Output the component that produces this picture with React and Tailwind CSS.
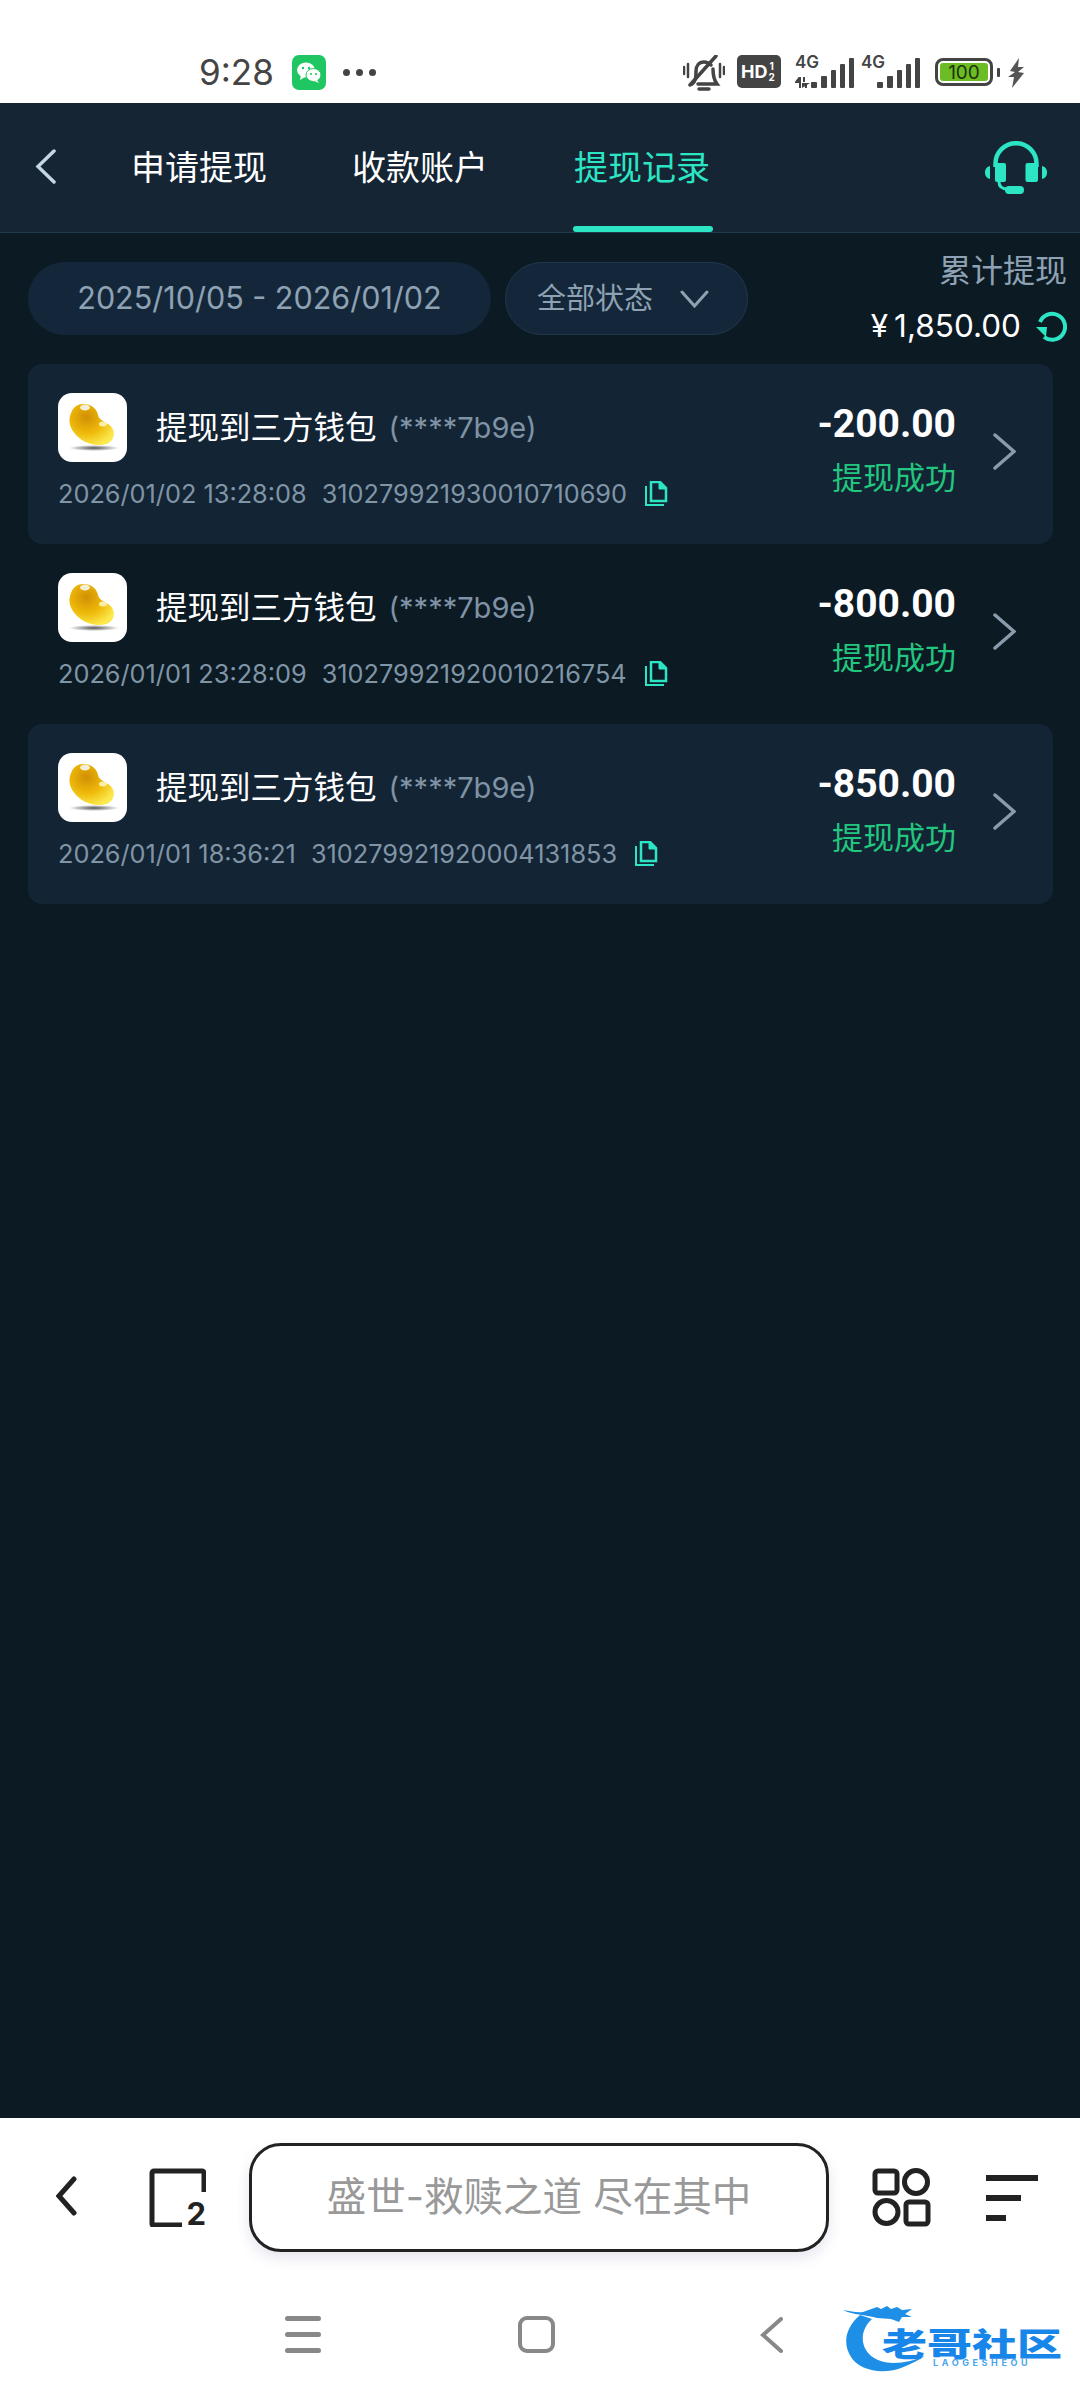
const font = { fontFamily: 'Inter, "Noto Sans CJK SC", sans-serif' }

const records = [
  { id: 1, time: '2026/01/02 13:28:08', no: '310279921930010710690', amount: '-200.00', filled: true },
  { id: 2, time: '2026/01/01 23:28:09', no: '310279921920010216754', amount: '-800.00', filled: false },
  { id: 3, time: '2026/01/01 18:36:21', no: '310279921920004131853', amount: '-850.00', filled: true },
]

function WeChat() {
  return (
    <div className="w-[34px] h-[35px] rounded-[7px] bg-[#1fc662] flex items-center justify-center">
      <svg width="26" height="24" viewBox="0 0 26 24">
        <ellipse cx="10" cy="9" rx="9" ry="7.5" fill="#fff" />
        <path d="M5 14l-1 5 5-3z" fill="#fff" />
        <ellipse cx="17.5" cy="14" rx="7.5" ry="6.5" fill="#fff" stroke="#1fc662" strokeWidth="1" />
        <path d="M21 19l2 3-5-2z" fill="#fff" />
        <circle cx="7" cy="7" r="1.2" fill="#1fc662" />
        <circle cx="13" cy="7" r="1.2" fill="#1fc662" />
        <circle cx="15" cy="13" r="1.1" fill="#1fc662" />
        <circle cx="20" cy="13" r="1.1" fill="#1fc662" />
      </svg>
    </div>
  )
}

function MuteBell() {
  return (
    <svg width="42" height="36" viewBox="0 0 42 36" fill="none" stroke="#444" strokeLinecap="round">
      <path d="M1 12v7M5 9v13M37 9v13M41 12v7" strokeWidth="2.500" />
      <path d="M9 29c4-3 4-7 4-13 0-5 3-9 8-9 3 0 5 1 7 3M30 14c0 6 1 11 4 15H15" strokeWidth="3.500" />
      <path d="M33 1L7 30" strokeWidth="3.500" />
      <path d="M16 34h10" strokeWidth="3.500" />
    </svg>
  )
}

function Signal({ arrows }) {
  return (
    <div className="relative h-[33px] w-[60px]">
      <span className="absolute left-0 top-[-3px] text-[17px] leading-[20px] font-semibold text-[#444]">4G</span>
      <svg className="absolute right-0 bottom-0" width="44" height="30" viewBox="0 0 44 30" fill="#444">
        <rect x="0" y="24" width="6" height="6" rx="1" />
        <rect x="10" y="18" width="6" height="12" rx="1" />
        <rect x="20" y="12" width="5" height="18" rx="1" />
        <rect x="29" y="6" width="5" height="24" rx="1" />
        <rect x="38" y="0" width="5" height="30" rx="1" />
      </svg>
      {arrows && (
        <svg className="absolute left-0 bottom-0" width="16" height="11" viewBox="0 0 16 11" fill="#444">
          <path d="M5 0v5H1zM5 6v5M9 0v5M11 6v5" stroke="#444" strokeWidth="2" />
          <path d="M7 11V6h8z" />
        </svg>
      )}
    </div>
  )
}

function StatusBar() {
  return (
    <div className="h-[103px] bg-white flex items-start pt-[55px] pl-[199px]">
      <span className="text-[35px] leading-[34px] text-[#444] w-[93px]">9:28</span>
      <WeChat />
      <div className="flex gap-[6px] ml-[17px] mt-[14px]">
        <span className="w-[7px] h-[7px] rounded-full bg-[#444]" />
        <span className="w-[7px] h-[7px] rounded-full bg-[#444]" />
        <span className="w-[7px] h-[7px] rounded-full bg-[#444]" />
      </div>
      <div className="ml-[307px]"><MuteBell /></div>
      <div className="ml-[12px] w-[44px] h-[33px] rounded-[5px] bg-[#444] flex items-center pl-[4px] gap-[1px] text-white font-bold">
        <span className="text-[18px] leading-none">HD</span>
        <span className="text-[10px] leading-[11px] flex flex-col items-center"><span>1</span><span>2</span></span>
      </div>
      <div className="ml-[14px]"><Signal arrows /></div>
      <div className="ml-[6px]"><Signal /></div>
      <div className="ml-[14px] mt-[3px] flex items-center">
        <div className="w-[58px] h-[28px] rounded-[8px] border-[3px] border-[#444] p-[2px]">
          <div className="h-full rounded-[3px] bg-[#6cbc25] flex items-center justify-center text-[19px] leading-none text-[#1d3308]">100</div>
        </div>
        <span className="ml-[4px] w-[3px] h-[9px] rounded-[1px] bg-[#444]" />
      </div>
      <svg className="ml-[8px] mt-[3px]" width="16" height="30" viewBox="0 0 16 30" fill="#555">
        <path d="M11 0L2 13l5 1-7 5h6l-2 11 12-15-6-1 6-5h-6z" />
      </svg>
    </div>
  )
}

function Headset() {
  return (
    <svg width="62" height="53" viewBox="0 0 62 53" fill="#2ce5c5">
      <path d="M10.5 26v-3.3a20.5 20.5 0 0 1 41 0V26" fill="none" stroke="#2ce5c5" strokeWidth="4.5" />
      <rect x="10" y="22" width="11" height="19" rx="2" />
      <rect x="40.5" y="22" width="12.5" height="19" rx="2" />
      <path d="M5 25C1 26 0 29 0 31.5S1 37 5 38z" />
      <path d="M57 25c4 1 5 4 5 6.5s-1 5.500-5 6.500z" />
      <path d="M14 41c0 5 3 7 9 7" fill="none" stroke="#2ce5c5" strokeWidth="3" />
      <rect x="20" y="45" width="19" height="8" rx="4" />
    </svg>
  )
}

function Header() {
  return (
    <div className="relative h-[130px] bg-[#152534] border-b border-[#1f3a4c] flex items-center text-white text-[34px]">
      <svg className="ml-[35px] mb-[3px]" width="21" height="35" viewBox="0 0 21 35" fill="none" stroke="#c3d6e6" strokeWidth="3.500" strokeLinecap="round">
        <path d="M19 2L3 17.500 19 33" />
      </svg>
      <span className="ml-[75px] w-[136px] leading-none whitespace-nowrap">申请提现</span>
      <span className="ml-[85px] w-[136px] leading-none whitespace-nowrap">收款账户</span>
      <span className="ml-[86px] w-[140px] leading-none whitespace-nowrap text-[#2ce5c5]">提现记录</span>
      <div className="ml-auto mr-[33px]"><Headset /></div>
      <span className="absolute left-[573px] bottom-0 w-[140px] h-[6px] rounded-[3px] bg-[#2ce5c5]" />
    </div>
  )
}

function Filters() {
  return (
    <div className="h-[131px] flex items-start pl-[28px] pr-[13px]">
      <div className="mt-[29px] w-[463px] h-[73px] rounded-full bg-[#14273a] flex items-center justify-center text-[30.5px] leading-none text-[#8ea2b3] whitespace-nowrap">
        2025/10/05 - 2026/01/02
      </div>
      <div className="mt-[29px] ml-[14px] w-[243px] h-[73px] rounded-full bg-[#14273a] border border-[#20384b] flex items-center pl-[31px] text-[29px] leading-none text-[#8ea2b3]">
        <span className="whitespace-nowrap">全部状态</span>
        <svg className="ml-[27px]" width="29" height="18" viewBox="0 0 29 18" fill="none" stroke="#8ea2b3" strokeWidth="3" strokeLinecap="round">
          <path d="M2 2l12.500 14L27 2" />
        </svg>
      </div>
      <div className="ml-auto flex flex-col items-end pt-[20px]">
        <span className="text-[32px] leading-[36px] text-[#8ea2b3]">累计提现</span>
        <div className="mt-[20px] flex items-center text-white">
          <span className="text-[31.5px] leading-[34px] whitespace-nowrap">¥<span className="ml-[6px]">1,850.00</span></span>
          <svg className="ml-[14px]" width="32" height="32" viewBox="0 0 32 32" fill="none">
            <path d="M5 12A13 13 0 1 1 9 27" stroke="#2ce5c5" strokeWidth="4" />
            <path d="M1 17h11l-1 10z" fill="#2ce5c5" />
          </svg>
        </div>
      </div>
    </div>
  )
}

function Bean() {
  return (
    <svg width="52" height="50" viewBox="-2 -1 52 50">
      <defs>
        <radialGradient id="bean" cx="38%" cy="32%" r="72%">
          <stop offset="0%" stopColor="#d18f04" />
          <stop offset="55%" stopColor="#eeba0a" />
          <stop offset="100%" stopColor="#fce94e" />
        </radialGradient>
        <radialGradient id="shade" cx="50%" cy="50%" r="50%">
          <stop offset="0%" stopColor="#555" />
          <stop offset="100%" stopColor="#fff" />
        </radialGradient>
      </defs>
      <ellipse cx="25" cy="44" rx="25" ry="3" fill="url(#shade)" />
      <path d="M14 0C24 0 28 6 29 11c1 5 6 6 10 9 7 4 8 13 2 18-8 6-24 3-33-6C0 24-1 16 2 9 4 3 9 0 14 0z" fill="url(#bean)" />
      <ellipse cx="16" cy="3.500" rx="5" ry="3" fill="#f4eed3" />
      <ellipse cx="34" cy="20" rx="4" ry="2.500" fill="#f7eea8" />
    </svg>
  )
}

function CopyIcon() {
  return (
    <svg width="24" height="26" viewBox="0 0 24 26" fill="none" stroke="#2ce5c5">
      <path d="M2 5v19h18" strokeWidth="2" />
      <path d="M7 1h9l6 6v13H7z" strokeWidth="2.500" />
      <path d="M15 1l7 7h-7z" fill="#2ce5c5" />
    </svg>
  )
}

function Record({ r }) {
  return (
    <div className={`h-[180px] rounded-[14px] flex items-start pl-[30px] pt-[29px] ${r.filled ? 'bg-[#132435]' : ''}`}>
      <div className="flex-1 min-w-0">
        <div className="flex items-center">
          <div className="w-[69px] h-[69px] rounded-[14px] bg-white flex items-center justify-center">
            <Bean />
          </div>
          <span className="ml-[29px] text-[31.5px] leading-none text-white whitespace-nowrap">提现到三方钱包</span>
          <span className="ml-[12px] text-[29px] leading-none text-[#7f93a5] whitespace-nowrap">(****7b9e)</span>
        </div>
        <div className="mt-[18px] flex items-center text-[25.3px] leading-[27px] text-[#8095a6] whitespace-nowrap">
          <span>{r.time}</span>
          <span className="ml-[15px]">{r.no}</span>
          <span className="ml-[17px]"><CopyIcon /></span>
        </div>
      </div>
      <div className="flex flex-col items-end mt-[11px]">
        <span className="text-[39px] leading-[40px] font-bold text-white whitespace-nowrap" style={{ fontFamily: 'Roboto, sans-serif' }}>{r.amount}</span>
        <span className="mt-[17px] text-[31px] leading-[34px] text-[#22c67f] whitespace-nowrap">提现成功</span>
      </div>
      <svg className="ml-[37px] mr-[37px] mt-[40px]" width="23" height="37" viewBox="0 0 23 37" fill="none" stroke="#8a9bab" strokeWidth="3.500" strokeLinecap="round">
        <path d="M2 2l19 16.500L2 35" />
      </svg>
    </div>
  )
}

function BottomBar() {
  return (
    <div className="h-[282px] bg-white">
      <div className="h-[138px] flex items-start pt-[25px]">
        <svg className="ml-[56px] mt-[33px]" width="21" height="40" viewBox="0 0 21 40" fill="none" stroke="#222" strokeWidth="5" strokeLinecap="round">
          <path d="M18 3L3 20l15 17" />
        </svg>
        <div className="ml-[72px] mt-[25px] relative w-[57px] h-[59px]">
          <svg width="57" height="59" viewBox="0 0 57 59" fill="none" stroke="#222" strokeWidth="5">
            <path d="M55 24V5a2 2 0 0 0-2-2H5a2 2 0 0 0-2 2v51a1 1 0 0 0 1 1h29" />
          </svg>
          <span className="absolute right-0 bottom-[-4px] text-[31px] leading-[34px] font-bold text-[#222]">2</span>
        </div>
        <div className="ml-[43px] w-[580px] h-[109px] rounded-[32px] border-[3px] border-[#222] bg-white shadow-[0_6px_14px_rgba(70,80,140,0.14)] flex items-center justify-center text-[39.5px] leading-none text-[#999] whitespace-nowrap">
          盛世-救赎之道 尽在其中
        </div>
        <svg className="ml-[43px] mt-[25px]" width="59" height="59" viewBox="0 0 59 59" fill="none" stroke="#222" strokeWidth="5">
          <rect x="3" y="3" width="22" height="22" rx="3" />
          <circle cx="44" cy="14" r="11.500" />
          <circle cx="14.500" cy="44" r="11.500" />
          <rect x="34" y="34" width="22" height="22" rx="3" />
        </svg>
        <div className="ml-[55px] mt-[32px] flex flex-col gap-[14px]">
          <span className="w-[52px] h-[6px] bg-[#222]" />
          <span className="w-[35px] h-[6px] bg-[#222]" />
          <span className="w-[20px] h-[6px] bg-[#222]" />
        </div>
      </div>
      <div className="h-[144px] flex items-start">
        <div className="ml-[285px] mt-[60px] w-[36px] flex flex-col gap-[11px]">
          <span className="h-[5px] rounded-full bg-[#888]" />
          <span className="h-[5px] rounded-full bg-[#888]" />
          <span className="h-[5px] rounded-full bg-[#888]" />
        </div>
        <div className="ml-[197px] mt-[60px] w-[37px] h-[37px] rounded-[9px] border-[4px] border-[#888]" />
        <svg className="ml-[205px] mt-[61px]" width="23" height="36" viewBox="0 0 23 36" fill="none" stroke="#888" strokeWidth="4" strokeLinecap="round">
          <path d="M21 2L3 18l18 16" />
        </svg>
        <Logo />
      </div>
    </div>
  )
}

function Logo() {
  return (
    <div className="relative ml-[60px] mt-[47px] w-[220px] h-[70px]">
      <svg className="absolute left-0 top-0" width="220" height="70" viewBox="0 0 220 70" fill="#1e8fe6">
        <path d="M17 12C3 24-1 40 8 54c8 13 30 18 50 11 10-4 18-8 24-12-14 6-34 10-47 4C18 50 14 30 29 16z" />
        <path d="M0 7c8 1 14 3 20 2l14-5 4 2 6-3 4 3 6-2 5 3 10-1-7 5 7 3-10 0-3 5-8-3-14-1C25 12 10 12 0 7z" />
      </svg>
      <span className="absolute left-[39px] top-[25px] text-[45px] leading-[28px] font-black text-[#1786e8] whitespace-nowrap scale-y-[0.72] origin-center" style={{ fontFamily: '"Noto Sans CJK SC", sans-serif' }}>老哥社区</span>
      <span className="absolute left-[90px] top-[55px] text-[9px] leading-[10px] font-bold tracking-[3.6px] text-[#4ba6ec] whitespace-nowrap">LAOGESHEOU</span>
    </div>
  )
}

export default function App() {
  return (
    <div className="w-[1080px] h-[2400px] flex flex-col bg-[#0c1a24]" style={font}>
      <StatusBar />
      <Header />
      <Filters />
      <div className="flex-1 px-[28px]">
        <div className="w-[1025px]">
          {records.map(r => <Record key={r.id} r={r} />)}
        </div>
      </div>
      <BottomBar />
    </div>
  )
}
